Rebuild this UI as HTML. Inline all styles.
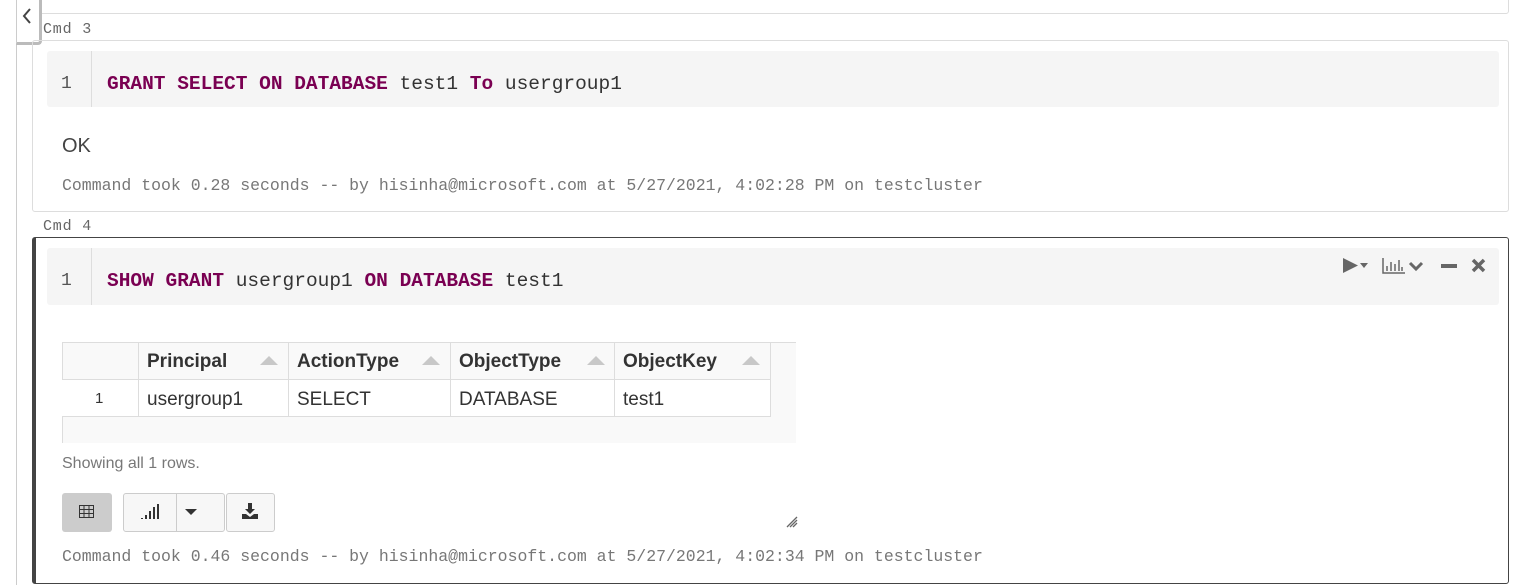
<!DOCTYPE html>
<html><head><meta charset="utf-8"><style>
*{box-sizing:border-box;margin:0;padding:0}
body{width:1514px;height:585px;background:#fff;position:relative;overflow:hidden;font-family:"Liberation Sans",Arial,sans-serif}
.a{position:absolute}
.mono{font-family:"Liberation Mono","DejaVu Sans Mono",monospace}
.kw{color:#7a0052;font-weight:bold}
.code{background:#f5f5f5;border-radius:3px}
.ln{color:#555;font-size:18px}
.gut{border-left:1px solid #ddd}
.lbl{font-size:15px;color:#666;letter-spacing:0.8px}
.meta{font-size:16.5px;color:#777}
.th{font-weight:bold;font-size:19px;color:#333}
.td{font-size:19px;color:#333}
.tri{width:0;height:0;border-left:9px solid transparent;border-right:9px solid transparent;border-bottom:9px solid #c8c8c8}
.btn{border:1px solid #ccc;border-radius:3px;background:#f7f7f7}
</style></head><body>
<div class="a" style="left:16px;top:0;width:1px;height:585px;background:#ccc"></div>
<div class="a" style="left:32px;top:-10px;width:1477px;height:24px;border:1px solid #ddd;border-radius:3px"></div>
<div class="a" style="left:16px;top:-3px;width:26px;height:48px;background:#fff;border:1px solid #ccc;border-right:3px solid #bbb;border-bottom:3px solid #bbb;border-radius:0 0 4px 0"></div>
<svg class="a" style="left:20px;top:7px" width="14" height="18"><path d="M10 2 L4 9 L10 16" stroke="#444" stroke-width="2" fill="none"/></svg>

<div class="a mono lbl" style="left:43px;top:21px">Cmd 3</div>
<div class="a" style="left:32px;top:40px;width:1477px;height:172px;border:1px solid #ddd;border-radius:3px"></div>
<div class="a code" style="left:47px;top:51px;width:1452px;height:56px"></div>
<div class="a gut" style="left:91px;top:51px;height:56px"></div>
<div class="a mono ln" style="left:61px;top:74px">1</div>
<div class="a mono" style="left:107px;top:73px;font-size:19.5px;color:#333;white-space:pre"><span class="kw">GRANT SELECT ON DATABASE</span> test1 <span class="kw">To</span> usergroup1</div>
<div class="a" style="left:62px;top:135px;font-size:20px;color:#444">OK</div>
<div class="a mono meta" style="left:62px;top:176px">Command took 0.28 seconds -- by hisinha@microsoft.com at 5/27/2021, 4:02:28 PM on testcluster</div>

<div class="a mono lbl" style="left:43px;top:218px">Cmd 4</div>
<div class="a" style="left:32px;top:237px;width:1477px;height:347px;border:1px solid #444;border-left:4px solid #444;border-radius:3px"></div>
<div class="a code" style="left:47px;top:248px;width:1452px;height:57px"></div>
<div class="a gut" style="left:91px;top:248px;height:57px"></div>
<div class="a mono ln" style="left:61px;top:271px">1</div>
<div class="a mono" style="left:107px;top:270px;font-size:19.5px;color:#333;white-space:pre"><span class="kw">SHOW GRANT</span> usergroup1 <span class="kw">ON DATABASE</span> test1</div>
<svg class="a" style="left:1340px;top:255px" width="150" height="22">
<path d="M3 3 L18 10.5 L3 18 Z" fill="#666"/>
<path d="M20 8 L28 8 L24 13 Z" fill="#666"/>
<g stroke="#666" stroke-width="1.5" fill="none"><path d="M43 3 V18 H65"/><path d="M47 11V16M51 7V16M55 9V16M59 5V16M62 12V16"/></g>
<path d="M70 8 L76 14 L82 8" stroke="#666" stroke-width="3" fill="none"/>
<rect x="101" y="9" width="16" height="4" fill="#666"/>
<path d="M133 5 L144 16 M144 5 L133 16" stroke="#666" stroke-width="3.5"/>
</svg>
<div class="a" style="left:62px;top:342px;width:734px;height:101px;background:#f9f9f9;border-top:1px solid #ddd;border-left:1px solid #ddd"></div>
<div class="a" style="left:62px;top:379px;width:709px;height:38px;background:#fff;border-top:1px solid #ddd;border-bottom:1px solid #ddd;border-right:1px solid #ddd"></div>
<div class="a" style="left:138px;top:343px;width:1px;height:74px;background:#ddd"></div>
<div class="a" style="left:288px;top:343px;width:1px;height:74px;background:#ddd"></div>
<div class="a" style="left:450px;top:343px;width:1px;height:74px;background:#ddd"></div>
<div class="a" style="left:614px;top:343px;width:1px;height:74px;background:#ddd"></div>
<div class="a" style="left:770px;top:343px;width:1px;height:36px;background:#ddd"></div>
<div class="a th" style="left:147px;top:351px">Principal</div><div class="a tri" style="left:260px;top:356px"></div>
<div class="a th" style="left:297px;top:351px">ActionType</div><div class="a tri" style="left:422px;top:356px"></div>
<div class="a th" style="left:459px;top:351px">ObjectType</div><div class="a tri" style="left:587px;top:356px"></div>
<div class="a th" style="left:623px;top:351px">ObjectKey</div><div class="a tri" style="left:742px;top:356px"></div>
<div class="a" style="left:95px;top:390px;font-size:15px;color:#333">1</div>
<div class="a td" style="left:147px;top:389px">usergroup1</div>
<div class="a td" style="left:297px;top:389px">SELECT</div>
<div class="a td" style="left:459px;top:389px">DATABASE</div>
<div class="a td" style="left:623px;top:389px">test1</div>
<div class="a" style="left:62px;top:455px;font-size:16px;color:#777">Showing all 1 rows.</div>
<div class="a" style="left:62px;top:493px;width:50px;height:39px;background:#ccc;border-radius:3px"></div>
<svg class="a" style="left:79px;top:505px" width="16" height="14"><rect x="0.5" y="0.5" width="14" height="12" fill="none" stroke="#333"/><path d="M0 4.5H15M0 8.5H15M5 0V13M10 0V13" stroke="#333"/></svg>
<div class="a btn" style="left:123px;top:493px;width:102px;height:39px"></div>
<div class="a" style="left:176px;top:494px;width:1px;height:37px;background:#ccc"></div>
<svg class="a" style="left:140px;top:504px" width="20" height="16"><path d="M1 14h2v1H1zM5 11h2v4H5zM9 7h2v8H9zM13 3h2v12h-2zM17 0h2v15h-2z" fill="#333"/></svg>
<svg class="a" style="left:185px;top:509px" width="12" height="8"><path d="M0 0 L12 0 L6 6Z" fill="#333"/></svg>
<div class="a btn" style="left:226px;top:493px;width:49px;height:39px"></div>
<svg class="a" style="left:241px;top:503px" width="18" height="17"><path d="M7 0h4v6h3l-5 5-5-5h3z" fill="#333"/><path d="M1 11h4l4 3 4-3h4v5H1z" fill="#333"/></svg>
<svg class="a" style="left:786px;top:516px" width="12" height="12"><path d="M11 1L1 11M11 4L4 11M11 7L7 11" stroke="#666" stroke-width="1.3"/></svg>
<div class="a mono meta" style="left:62px;top:547px">Command took 0.46 seconds -- by hisinha@microsoft.com at 5/27/2021, 4:02:34 PM on testcluster</div>
</body></html>
